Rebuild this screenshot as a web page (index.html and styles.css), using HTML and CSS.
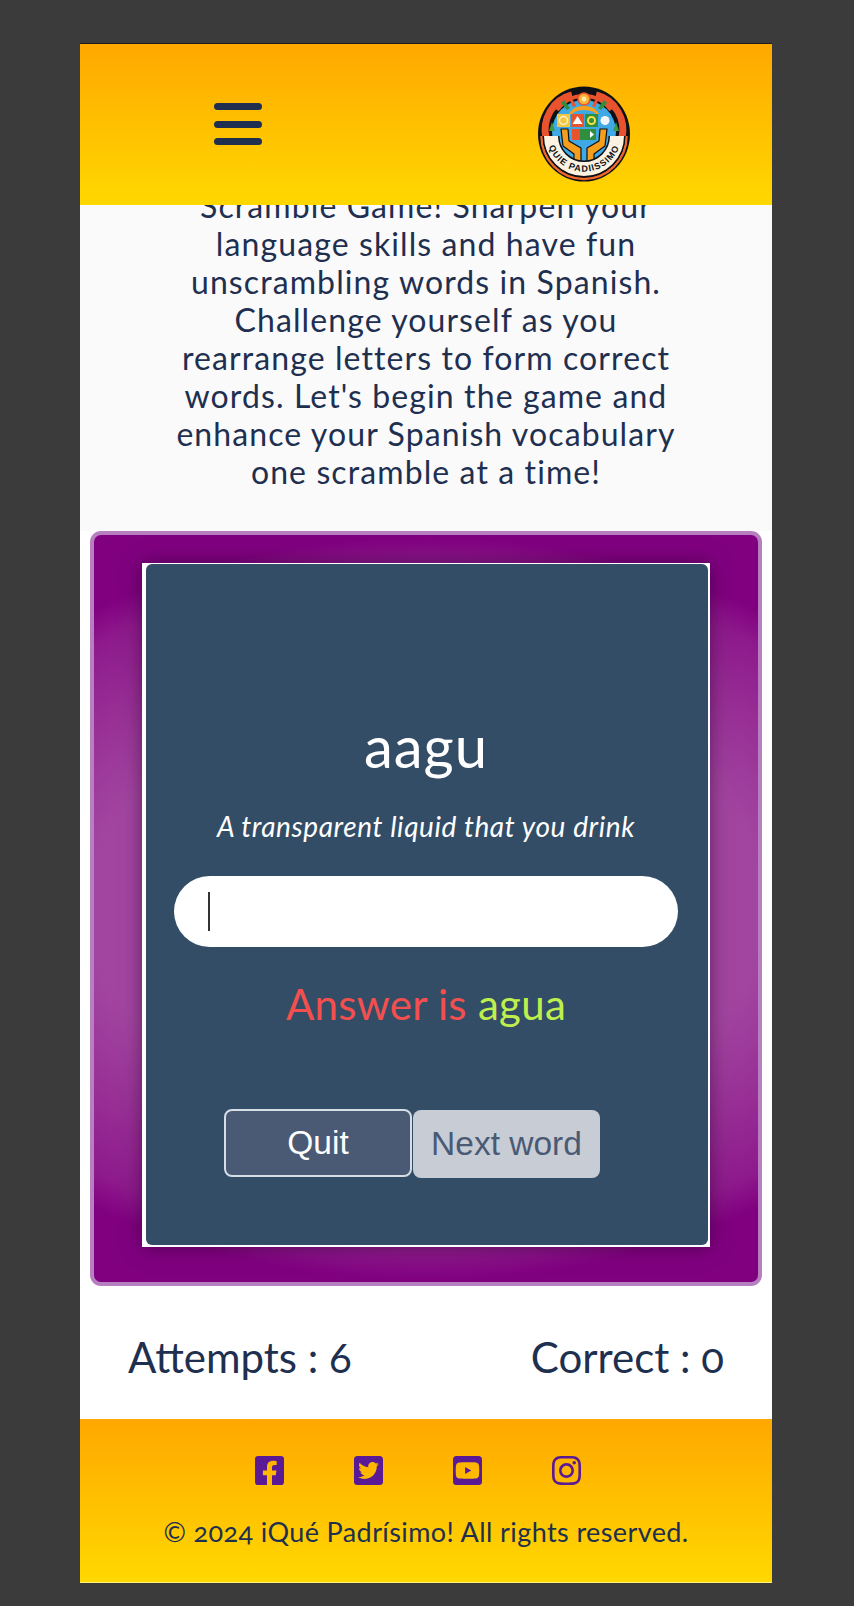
FILE: index.html
```html
<!DOCTYPE html>
<html lang="en">
<head>
<meta charset="utf-8">
<title>Scramble Game</title>
<link rel="stylesheet" href="styles.css">
</head>
<body>
<div class="phone">
  <header class="topbar">
    <button class="burger" aria-label="Menu"><span></span><span></span><span></span></button>
    <svg class="logo" viewBox="0 0 92 96" role="img" aria-label="Qué Padrísimo">
      <ellipse cx="46" cy="48" rx="46" ry="47.500" fill="#0d1116"/>
      <path d="M3.500 50A42.500 43 0 0 0 88.500 50" fill="none" stroke="#f0682e" stroke-width="2.500"/>
      <circle cx="46" cy="46" r="32" fill="#3fa9e6"/>
      <path d="M8 52C4 34 14 14 34 9M84 52C88 34 78 14 58 9" fill="none" stroke="#e8532d" stroke-width="7"/>
      <path d="M19 24A33 33 0 0 1 73 24" fill="none" stroke="#e8532d" stroke-width="4"/>
      <circle cx="46" cy="13" r="6" fill="#f9b233" stroke="#e8532d" stroke-width="1.500"/>
      <circle cx="46" cy="13" r="2.500" fill="#ffe9a8"/>
      <path d="M31 28c3-6 9-8 15-8s12 2 15 8l-3 0c-3-3-7-4-12-4s-9 1-12 4z" fill="#f6a01f"/>
      <path d="M26 14l6 8-3 2-6-7zM66 14l-6 8 3 2 6-7z" fill="#2f8f3e"/>
      <path d="M34 12l4 8-3 1-4-8zM58 12l-4 8 3 1 4-8z" fill="#e8532d"/>
      <path d="M14 36l3 9h-6zM78 36l3 9h-6z" fill="#3b9a4a"/>
      <rect x="19" y="28" width="13" height="13" fill="#f4c542"/>
      <rect x="33" y="28" width="13" height="13" fill="#e8532d"/>
      <rect x="47" y="28" width="13" height="13" fill="#2f8f3e"/>
      <rect x="61" y="28" width="12" height="13" fill="#3fa9e6"/>
      <circle cx="25.500" cy="34.500" r="4" fill="none" stroke="#fff3c4" stroke-width="1.500"/>
      <path d="M39.500 30l5 8h-10z" fill="#fff"/>
      <circle cx="53.500" cy="34.500" r="3.500" fill="none" stroke="#f4e04d" stroke-width="2"/>
      <circle cx="67" cy="34.500" r="4.500" fill="#f2f6fa"/>
      <rect x="34" y="43" width="8" height="11" fill="#e8532d"/>
      <rect x="42" y="43" width="8" height="11" fill="#2f8f3e"/>
      <rect x="50" y="43" width="8" height="11" fill="#2f8f3e"/>
      <path d="M52 45l4 3.500-4 3.500z" fill="#fff"/>
      <path d="M23 43h7l1 12 12 7v16h-7V68l-11-8zM69 43h-7l-1 12-12 7v16h7V68l11-8z" fill="#f59e1c" stroke="#0d1116" stroke-width="1.200" stroke-linejoin="round"/>
      <path d="M13 50A33 33 0 0 0 79 50" fill="none" stroke="#0d1116" stroke-width="17"/>
      <path d="M13 50A33 33 0 0 0 79 50" fill="none" stroke="#fbf2e2" stroke-width="14"/>
      <path id="arc" d="M8.700 52A37.500 37.500 0 0 0 83.300 52" fill="none"/>
      <text class="logo-text"><textPath href="#arc" startOffset="50%" text-anchor="middle">QUIE PADIISSIMO</textPath></text>
    </svg>
  </header>

  <main class="content">
    <p class="intro">Scramble Game! Sharpen your<br>language skills and have fun<br>unscrambling words in Spanish.<br>Challenge yourself as you<br>rearrange letters to form correct<br>words. Let's begin the game and<br>enhance your Spanish vocabulary<br>one scramble at a time!</p>

    <section class="game">
      <div class="sheet">
        <div class="panel">
          <h1 class="word">aagu</h1>
          <p class="hint">A transparent liquid that you drink</p>
          <div class="field"><span class="caret"></span></div>
          <p class="answer">Answer is <span class="answer-word">agua</span></p>
          <div class="actions">
            <button class="btn btn-quit">Quit</button>
            <button class="btn btn-next">Next word</button>
          </div>
        </div>
      </div>
    </section>

    <div class="stats">
      <span>Attempts : 6</span>
      <span>Correct : 0</span>
    </div>
  </main>

  <footer class="footer">
    <div class="socials">
      <svg class="social" viewBox="0 32 448 448"><path d="M400 32H48A48 48 0 0 0 0 80v352a48 48 0 0 0 48 48h137.250V327.690h-63V256h63v-54.640c0-62.150 37-96.480 93.670-96.480 27.140 0 55.520 4.840 55.520 4.840v61h-31.270c-30.810 0-40.420 19.120-40.420 38.730V256h68.780l-11 71.690h-57.780V480H400a48 48 0 0 0 48-48V80a48 48 0 0 0-48-48z"/></svg>
      <svg class="social" viewBox="0 32 448 448"><path d="M400 32H48C21.500 32 0 53.500 0 80v352c0 26.500 21.500 48 48 48h352c26.500 0 48-21.500 48-48V80c0-26.500-21.500-48-48-48zm-48.900 158.800c.2 2.800.2 5.700.2 8.500 0 86.700-66 186.600-186.600 186.600-37.200 0-71.700-10.800-100.700-29.400 5.300.6 10.400.8 15.800.8 30.700 0 58.900-10.400 81.400-28-28.800-.6-53-19.500-61.300-45.500 10.100 1.500 19.200 1.500 29.600-1.200-30-6.100-52.500-32.500-52.500-64.400v-.8c8.700 4.900 18.900 7.900 29.600 8.300a65.447 65.447 0 0 1-29.200-54.600c0-12.200 3.200-23.400 8.900-33.100 32.300 39.800 80.800 65.800 135.200 68.600-9.300-44.500 24-80.600 64-80.600 18.900 0 35.900 7.900 47.900 20.700 14.800-2.800 29-8.300 41.600-15.800-4.900 15.200-15.100 28-28.600 36 13.100-1.400 25.800-5 37.500-10.100-8.900 13.100-20.100 24.700-32.900 34z"/></svg>
      <svg class="social" viewBox="0 32 448 448"><path d="M186.800 202.100l95.200 54.100-95.200 54.100V202.100zM448 80v352c0 26.500-21.500 48-48 48H48c-26.500 0-48-21.500-48-48V80c0-26.500 21.500-48 48-48h352c26.500 0 48 21.500 48 48zm-42 176.300s0-59.600-7.600-88.200c-4.200-15.800-16.500-28.200-32.200-32.400C337.900 128 224 128 224 128s-113.900 0-142.200 7.700c-15.700 4.200-28 16.600-32.200 32.400-7.600 28.500-7.600 88.200-7.600 88.200s0 59.600 7.600 88.200c4.200 15.800 16.500 27.700 32.200 31.900C110.100 384 224 384 224 384s113.900 0 142.200-7.700c15.700-4.200 28-16.100 32.200-31.900 7.600-28.500 7.600-88.100 7.600-88.100z"/></svg>
      <svg class="social" viewBox="0 32 448 448"><path d="M224.100 141c-63.600 0-114.900 51.300-114.900 114.900s51.300 114.900 114.900 114.900S339 319.500 339 255.900 287.700 141 224.100 141zm0 189.600c-41.100 0-74.700-33.500-74.700-74.700s33.500-74.700 74.700-74.700 74.700 33.500 74.700 74.700-33.600 74.700-74.700 74.700zm146.400-194.300c0 14.900-12 26.800-26.800 26.800-14.900 0-26.800-12-26.800-26.800s12-26.800 26.800-26.800 26.800 12 26.800 26.800zm76.100 27.200c-1.700-35.900-9.900-67.700-36.200-93.900-26.200-26.200-58-34.400-93.900-36.200-37-2.100-147.900-2.100-184.900 0-35.800 1.700-67.600 9.900-93.900 36.100s-34.400 58-36.200 93.900c-2.100 37-2.100 147.900 0 184.900 1.700 35.900 9.900 67.700 36.200 93.900s58 34.400 93.900 36.200c37 2.100 147.900 2.100 184.900 0 35.900-1.700 67.700-9.900 93.900-36.200 26.200-26.200 34.400-58 36.200-93.900 2.100-37 2.100-147.800 0-184.800zM398.800 388c-7.800 19.600-22.900 34.700-42.600 42.600-29.500 11.700-99.500 9-132.100 9s-102.700 2.600-132.100-9c-19.600-7.800-34.700-22.900-42.600-42.600-11.700-29.500-9-99.500-9-132.100s-2.600-102.700 9-132.100c7.800-19.600 22.900-34.700 42.600-42.600 29.500-11.700 99.500-9 132.100-9s102.700-2.600 132.100 9c19.600 7.800 34.700 22.900 42.600 42.600 11.700 29.500 9 99.500 9 132.100s2.700 102.700-9 132.100z"/></svg>
    </div>
    <p class="copyright">© 2024 iQué Padrísimo! All rights reserved.</p>
  </footer>
</div>
</body>
</html>
```
FILE: styles.css
```css
* { box-sizing: border-box; }
html, body { margin: 0; padding: 0; }
body {
  background: #3b3b3b;
  font-family: Lato, "Open Sans", sans-serif;
  font-variant-numeric: oldstyle-nums;
  color: #1e2f50;
  padding: 44px 82px 25px 80px;
  height: 1606px;
  overflow: hidden;
}
.phone { width: 692px; box-shadow: 0 -1px 0 #1c1c1c; }

.topbar {
  height: 161px;
  background: linear-gradient(#ffa800, #ffd800);
  display: flex;
  align-items: flex-start;
  padding: 42px 0 0 134px;
}
.burger {
  width: 48px;
  height: 42px;
  padding: 0;
  margin: 17px 0 0;
  border: 0;
  background: none;
  display: flex;
  flex-direction: column;
  justify-content: space-between;
}
.burger span { display: block; height: 7px; border-radius: 4px; background: #1e2f50; }
.logo { width: 92px; height: 96px; margin-left: 276px; display: block; }
.logo-text { font: 800 9px "Liberation Sans", sans-serif; letter-spacing: 1px; fill: #0d1116; }

.content { overflow: hidden; background: #fff; }
.intro {
  margin: -18px 0 0;
  padding: 0 0 40px;
  background: #fafafa;
  text-align: center;
  font-size: 32px;
  line-height: 38px;
  letter-spacing: 1.1px;
  color: #1e2f50;
}
.game {
  margin: 0 10px;
  height: 755px;
  padding: 28px 48px 35px;
  border: 4px solid #b67fbf;
  border-radius: 11px;
  background: radial-gradient(ellipse 560px 372px at 50% 50%, #a245a0 0, #a245a0 60%, #8e1a8c 92%, #800080 100%);
}
.sheet {
  height: 100%;
  background: #fff;
  padding: 1px 2px 2px 4px;
  box-shadow: 0 0 18px rgba(40, 0, 40, 0.55);
}
.panel {
  height: 100%;
  background: #334d66;
  border-radius: 6px;
  padding: 149px 30px 0 28px;
  color: #fff;
  text-align: center;
}
.word { margin: 0; font-size: 58px; line-height: 66px; font-weight: 400; letter-spacing: 1px; }
.hint { margin: 30px 0 0; font-size: 28px; line-height: 34px; font-style: italic; letter-spacing: 0.6px; }
.field {
  margin: 33px 0 0;
  height: 71px;
  border-radius: 36px;
  background: #fff;
  display: flex;
  align-items: center;
  padding-left: 34px;
}
.caret { width: 1.500px; height: 39px; background: #333; }
.answer { margin: 31px 0 0; font-size: 42px; line-height: 52px; letter-spacing: 0.3px; color: #f44f4f; }
.answer-word { color: #bfef4f; }
.actions { margin: 79px 0 0 50px; display: flex; align-items: flex-start; gap: 1px; }
.btn {
  border-radius: 8px;
  font: 400 33.500px "Liberation Sans", Arial, sans-serif;
  padding: 0;
}
.btn-quit { width: 188px; height: 68px; background: #4a5a75; border: 2px solid #d5dde5; color: #fff; }
.btn-next { width: 187px; height: 68px; margin-top: 1px; background: #c8ccd4; border: 0; color: #4a5a75; }

.stats {
  height: 133px;
  padding: 8px 48px 0;
  display: flex;
  align-items: center;
  justify-content: space-between;
  font-size: 42px;
  color: #1e2f50;
}

.footer {
  height: 164px;
  background: linear-gradient(#ffa800, #ffd800);
  border-bottom: 1px solid #fff07a;
  padding-top: 37px;
  text-align: center;
}
.socials { display: flex; justify-content: center; gap: 70px; margin-right: 16px; }
.social { width: 29px; height: 29px; fill: #5a1a96; display: block; }
.copyright { margin: 30px 0 0; font-size: 27px; line-height: 34px; letter-spacing: 0.4px; color: #1e2f50; }
```
